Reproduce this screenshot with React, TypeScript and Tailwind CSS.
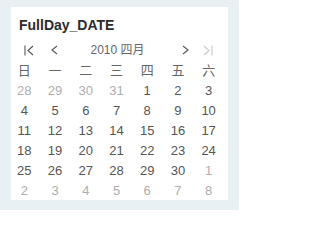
const weekdays = ["日", "一", "二", "三", "四", "五", "六"];

// 2010 April, weeks starting on Sunday
const days: { d: number; cur: boolean }[] = [];
[28, 29, 30, 31].forEach((d) => days.push({ d, cur: false }));
for (let d = 1; d <= 30; d++) days.push({ d, cur: true });
for (let d = 1; d <= 8; d++) days.push({ d, cur: false });

function FirstIcon() {
  return (
    <svg width="10" height="11" viewBox="0 0 10 11" fill="none" stroke="#555" strokeWidth="1.1">
      <line x1="1" y1="0.5" x2="1" y2="10.5" />
      <polyline points="9,1 4,5.5 9,10" />
    </svg>
  );
}

function PrevIcon() {
  return (
    <svg width="8" height="10" viewBox="0 0 8 10" fill="none" stroke="#555" strokeWidth="1.1">
      <polyline points="7,1 2,5 7,9" />
    </svg>
  );
}

function NextIcon() {
  return (
    <svg width="7" height="10" viewBox="0 0 7 10" fill="none" stroke="#555" strokeWidth="1.1">
      <polyline points="1,1 6,5 1,9" />
    </svg>
  );
}

function LastIcon() {
  return (
    <svg width="10" height="11" viewBox="0 0 10 11" fill="none" stroke="#c8c8c8" strokeWidth="1.1">
      <polyline points="1,1 6,5.5 1,10" />
      <line x1="9" y1="0.5" x2="9" y2="10.5" />
    </svg>
  );
}

export default function App() {
  return (
    <div
      className="w-[239px] h-[210px] bg-[#e9f0f4] pt-[7px] pl-[11px]"
      style={{ fontFamily: '"Liberation Sans", "Noto Sans CJK SC", sans-serif' }}
    >
      <div className="w-[217px] h-[193px] bg-white pt-[8px]">
        {/* Title */}
        <div className="pl-[8px] h-[20px] leading-[20px] text-[14px] font-bold text-[#2b2b2b]">
          FullDay_DATE
        </div>

        {/* Navigation */}
        <div className="mt-[5px] h-[20px] flex items-center">
          <span className="ml-[13px] flex">
            <FirstIcon />
          </span>
          <span className="ml-[16px] flex">
            <PrevIcon />
          </span>
          <span className="w-[119px] text-center text-[12px] text-[#666]">2010 四月</span>
          <span className="ml-[5px] flex">
            <NextIcon />
          </span>
          <span className="ml-[14px] flex">
            <LastIcon />
          </span>
        </div>

        {/* Weekday header */}
        <div className="-ml-[2px] w-[215px] grid grid-cols-7 h-[21px] items-center">
          {weekdays.map((w) => (
            <div key={w} className="text-center text-[13px] text-[#666] leading-[21px]">
              {w}
            </div>
          ))}
        </div>

        {/* Days */}
        <div className="-ml-[2px] w-[215px] grid grid-cols-7">
          {days.map((x, i) => (
            <div
              key={i}
              className={`h-[20px] leading-[20px] text-center text-[13px] ${
                x.cur ? "text-[#555]" : "text-[#adadad]"
              }`}
            >
              {x.d}
            </div>
          ))}
        </div>
      </div>
    </div>
  );
}
